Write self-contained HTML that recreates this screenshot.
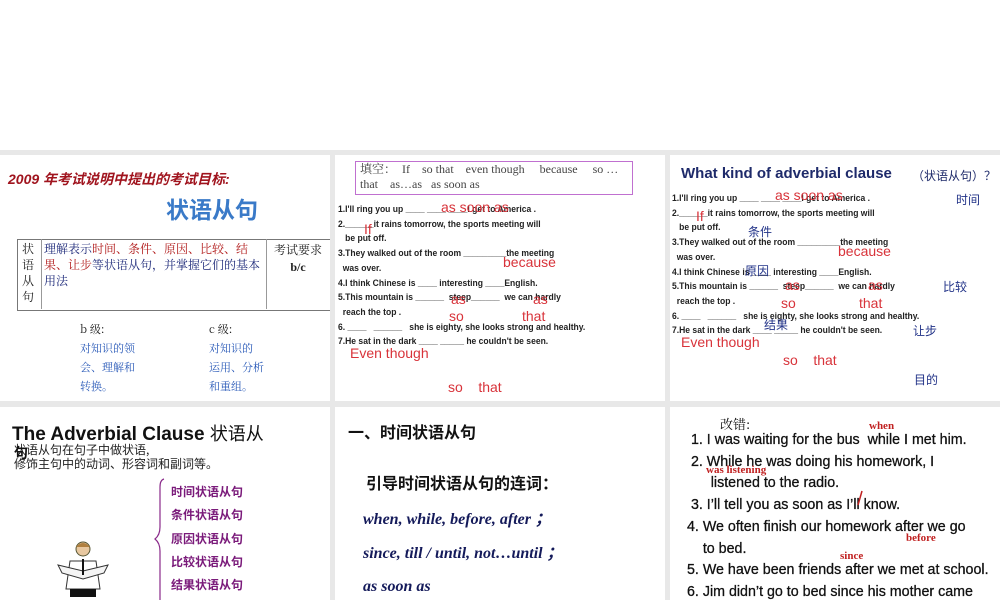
<!DOCTYPE html>
<html><head><meta charset="utf-8"><style>
body{margin:0;width:1000px;height:600px;overflow:hidden;background:#fff;font-family:"Liberation Sans","Noto Sans CJK SC",sans-serif;position:relative}
.bg{position:absolute;left:0;top:150px;width:1000px;height:450px;background:#e8e8e8}
.p{position:absolute;background:#fff;overflow:hidden}
.a{position:absolute;white-space:nowrap}
.q{font-size:9px;font-weight:bold;color:#222;line-height:14.7px;transform:scaleX(0.95);transform-origin:0 0}
.r{color:#d8333a}
.bl{color:#223388;font-family:"Noto Sans CJK SC",sans-serif}
.cj{font-family:"Noto Serif CJK SC",serif}
</style></head><body>
<div class="bg"></div>

<!-- panel 1 -->
<div class="p" style="left:0;top:155px;width:330px;height:246px">
<div class="a" style="left:8px;top:14px;font-size:14px;font-style:italic;font-weight:bold;color:#a0141e">2009 年考试说明中提出的考试目标:</div>
<div class="a" style="left:166px;top:36px;font-size:23px;font-weight:bold;color:#3a7ac8;font-family:'Noto Sans CJK SC',sans-serif">状语从句</div>
<div class="a" style="left:17px;top:84px;width:312px;height:70px;border:1px solid #777"></div>
<div class="a" style="left:41px;top:84px;width:1px;height:70px;background:#999"></div>
<div class="a" style="left:266px;top:84px;width:1px;height:70px;background:#999"></div>
<div class="a cj" style="left:22px;top:86px;font-size:12px;line-height:16px;white-space:normal;width:14px;color:#222">状语从句</div>
<div class="a cj" style="left:44px;top:86px;font-size:12px;line-height:16px;white-space:normal;width:222px;color:#1e2a7a">理解表示<span style="color:#b01818">时间、条件、原因、比较、结果、让步</span>等状语从句，并掌握它们的基本用法</div>
<div class="a cj" style="left:270px;top:86px;font-size:12px;line-height:17px;text-align:center;width:56px;color:#222">考试要求<br><b style="font-family:'Liberation Serif'">b/c</b></div>
<div class="a cj" style="left:80px;top:165px;font-size:11px;line-height:19px;color:#222">b 级:<br><span style="color:#2a5ab8">对知识的领<br>会、理解和<br>转换。</span></div>
<div class="a cj" style="left:209px;top:165px;font-size:11px;line-height:19px;color:#222">c 级:<br><span style="color:#2a5ab8">对知识的<br>运用、分析<br>和重组。</span></div>
</div>

<!-- panel 2 -->
<div class="p" style="left:335px;top:155px;width:330px;height:246px">
<div class="a cj" style="left:20px;top:6px;width:272px;height:32px;border:1px solid #c070d0;font-size:12px;line-height:15px;color:#444;white-space:normal;padding-left:4px;font-family:'Liberation Serif','Noto Serif CJK SC',serif">填空：&nbsp; If &nbsp;&nbsp; so that &nbsp;&nbsp; even though &nbsp;&nbsp;&nbsp; because &nbsp;&nbsp;&nbsp; so …that &nbsp;&nbsp; as…as &nbsp; as soon as</div>
<div class="a q" style="left:3px;top:47px">1.I'll ring you up ____ ____ ____I get to America .<br>2.______it rains tomorrow, the sports meeting will<br>&nbsp;&nbsp; be put off.<br>3.They walked out of the room _________the meeting<br>&nbsp; was over.<br>4.I think Chinese is ____ interesting ____English.<br>5.This mountain is ______ &nbsp;steep______ &nbsp;we can hardly<br>&nbsp; reach the top .<br>6. ____ &nbsp; ______ &nbsp; she is eighty, she looks strong and healthy.<br>7.He sat in the dark ____ _____ he couldn't be seen.</div>
<div class="a r" style="left:106px;top:44px;font-size:14px">as soon as</div>
<div class="a r" style="left:29px;top:66px;font-size:14px">If</div>
<div class="a r" style="left:168px;top:99px;font-size:14px">because</div>
<div class="a r" style="left:116px;top:136px;font-size:14px">as</div>
<div class="a r" style="left:198px;top:136px;font-size:14px">as</div>
<div class="a r" style="left:114px;top:153px;font-size:14px">so</div>
<div class="a r" style="left:187px;top:153px;font-size:14px">that</div>
<div class="a r" style="left:15px;top:190px;font-size:14px">Even though</div>
<div class="a r" style="left:113px;top:224px;font-size:14px">so &nbsp;&nbsp; that</div>
</div>

<!-- panel 3 -->
<div class="p" style="left:670px;top:155px;width:330px;height:246px">
<div class="a" style="left:11px;top:10px;font-size:15px;font-weight:bold;color:#1e2a6a">What kind of adverbial clause</div>
<div class="a" style="left:242px;top:12px;font-size:12px;color:#1e2a6a">（状语从句）？</div>
<div class="a q" style="left:2px;top:36px">1.I'll ring you up ____ ____ ____I get to America .<br>2.______it rains tomorrow, the sports meeting will<br>&nbsp;&nbsp; be put off.<br>3.They walked out of the room _________the meeting<br>&nbsp; was over.<br>4.I think Chinese is ____ interesting ____English.<br>5.This mountain is ______ &nbsp;steep______ &nbsp;we can hardly<br>&nbsp; reach the top .<br>6. ____ &nbsp; ______ &nbsp; she is eighty, she looks strong and healthy.<br>7.He sat in the dark ____ _____ he couldn't be seen.</div>
<div class="a r" style="left:105px;top:32px;font-size:14px">as soon as</div>
<div class="a r" style="left:26px;top:53px;font-size:14px">If</div>
<div class="a r" style="left:168px;top:88px;font-size:14px">because</div>
<div class="a r" style="left:115px;top:122px;font-size:14px">as</div>
<div class="a r" style="left:198px;top:122px;font-size:14px">as</div>
<div class="a r" style="left:111px;top:140px;font-size:14px">so</div>
<div class="a r" style="left:189px;top:140px;font-size:14px">that</div>
<div class="a r" style="left:11px;top:179px;font-size:14px">Even though</div>
<div class="a r" style="left:113px;top:197px;font-size:14px">so &nbsp;&nbsp; that</div>
<div class="a bl" style="left:286px;top:36px;font-size:12px">时间</div>
<div class="a bl" style="left:78px;top:68px;font-size:12px">条件</div>
<div class="a bl" style="left:75px;top:107px;font-size:12px">原因</div>
<div class="a bl" style="left:273px;top:123px;font-size:12px">比较</div>
<div class="a bl" style="left:94px;top:161px;font-size:12px">结果</div>
<div class="a bl" style="left:243px;top:167px;font-size:12px">让步</div>
<div class="a bl" style="left:244px;top:216px;font-size:12px">目的</div>
</div>

<!-- panel 4 -->
<div class="p" style="left:0;top:407px;width:330px;height:193px">
<div class="a" style="left:12px;top:13px;font-size:19px;font-weight:bold;color:#111">The Adverbial Clause <span style="font-weight:normal;font-family:'Noto Sans CJK SC',sans-serif;font-size:18px">状语从</span></div>
<div class="a" style="left:14px;top:36px;font-size:12px;color:#222;font-family:'Noto Sans CJK SC',sans-serif;line-height:14px">状语从句在句子中做状语,<br>修饰主句中的动词、形容词和副词等。</div>
<div class="a" style="left:14px;top:36px;font-size:14px;font-weight:bold;color:#111;font-family:'Noto Sans CJK SC',sans-serif">句</div>
<svg class="a" style="left:152px;top:70px" width="16" height="125"><path d="M12 2 Q8 3 8 10 L8 50 Q8 58 3 62 Q8 66 8 74 L8 125" fill="none" stroke="#8a2a8a" stroke-width="1.2"/></svg>
<div class="a" style="left:171px;top:73px;font-size:12px;font-weight:bold;color:#7a1a7a;line-height:23.3px;font-family:'Noto Sans CJK SC',sans-serif">时间状语从句<br>条件状语从句<br>原因状语从句<br>比较状语从句<br>结果状语从句</div>
<svg class="a" style="left:56px;top:132px" width="54" height="58"><circle cx="27" cy="10" r="7" fill="#e8c8a0" stroke="#553" stroke-width="1"/><path d="M20 8 Q27 0 34 8" fill="#b08040"/><path d="M14 22 L40 22 L44 50 L10 50 Z" fill="#fff" stroke="#333"/><path d="M2 26 L27 32 L52 26 L48 34 L27 40 L6 34 Z" fill="#f4f4f4" stroke="#333"/><path d="M26 20 L28 20 L28 36 L26 36 Z" fill="#111"/><rect x="14" y="50" width="26" height="8" fill="#111"/></svg>
</div>

<!-- panel 5 -->
<div class="p" style="left:335px;top:407px;width:330px;height:193px">
<div class="a" style="left:13px;top:12px;font-size:16px;font-weight:bold;color:#111;font-family:'Noto Sans CJK SC',sans-serif">一、时间状语从句</div>
<div class="a" style="left:31px;top:63px;font-size:16px;font-weight:bold;color:#111;font-family:'Noto Sans CJK SC',sans-serif">引导时间状语从句的连词：</div>
<div class="a" style="left:28px;top:96px;font-size:16px;font-weight:bold;font-style:italic;color:#141a5a;font-family:'Liberation Serif',serif;line-height:33.5px">when, while, before, after ；<br>since, till / until, not…until ；<br>as soon as</div>
</div>

<!-- panel 6 -->
<div class="p" style="left:670px;top:407px;width:330px;height:193px">
<div class="a cj" style="left:50px;top:7px;font-size:13px;color:#111">改错:</div>
<div class="a" style="left:17px;top:22px;font-size:15px;color:#111;line-height:21.7px;transform:scaleX(0.95);transform-origin:0 0;-webkit-text-stroke:0.3px #111">&nbsp;1. I was waiting for the bus &nbsp;while I met him.<br>&nbsp;2. While he was doing his homework, I<br>&nbsp;&nbsp;&nbsp;&nbsp;&nbsp; listened to the radio.<br>&nbsp;3. I’ll tell you as soon as I’ll know.<br>4. We often finish our homework after we go<br>&nbsp;&nbsp;&nbsp; to bed.<br>5. We have been friends after we met at school.<br>6. Jim didn’t go to bed since his mother came</div>
<div class="a" style="left:199px;top:13px;font-size:11px;font-weight:bold;color:#c02020;font-family:'Liberation Serif',serif">when</div>
<div class="a" style="left:36px;top:57px;font-size:11px;font-weight:bold;color:#c02020;font-family:'Liberation Serif',serif">was listening</div>
<div class="a" style="left:236px;top:125px;font-size:11px;font-weight:bold;color:#c02020;font-family:'Liberation Serif',serif">before</div>
<div class="a" style="left:170px;top:143px;font-size:11px;font-weight:bold;color:#c02020;font-family:'Liberation Serif',serif">since</div>
<svg class="a" style="left:186px;top:83px" width="8" height="16"><path d="M6 1 L2 15" stroke="#c02020" stroke-width="1.5"/></svg>
</div>
</body></html>
